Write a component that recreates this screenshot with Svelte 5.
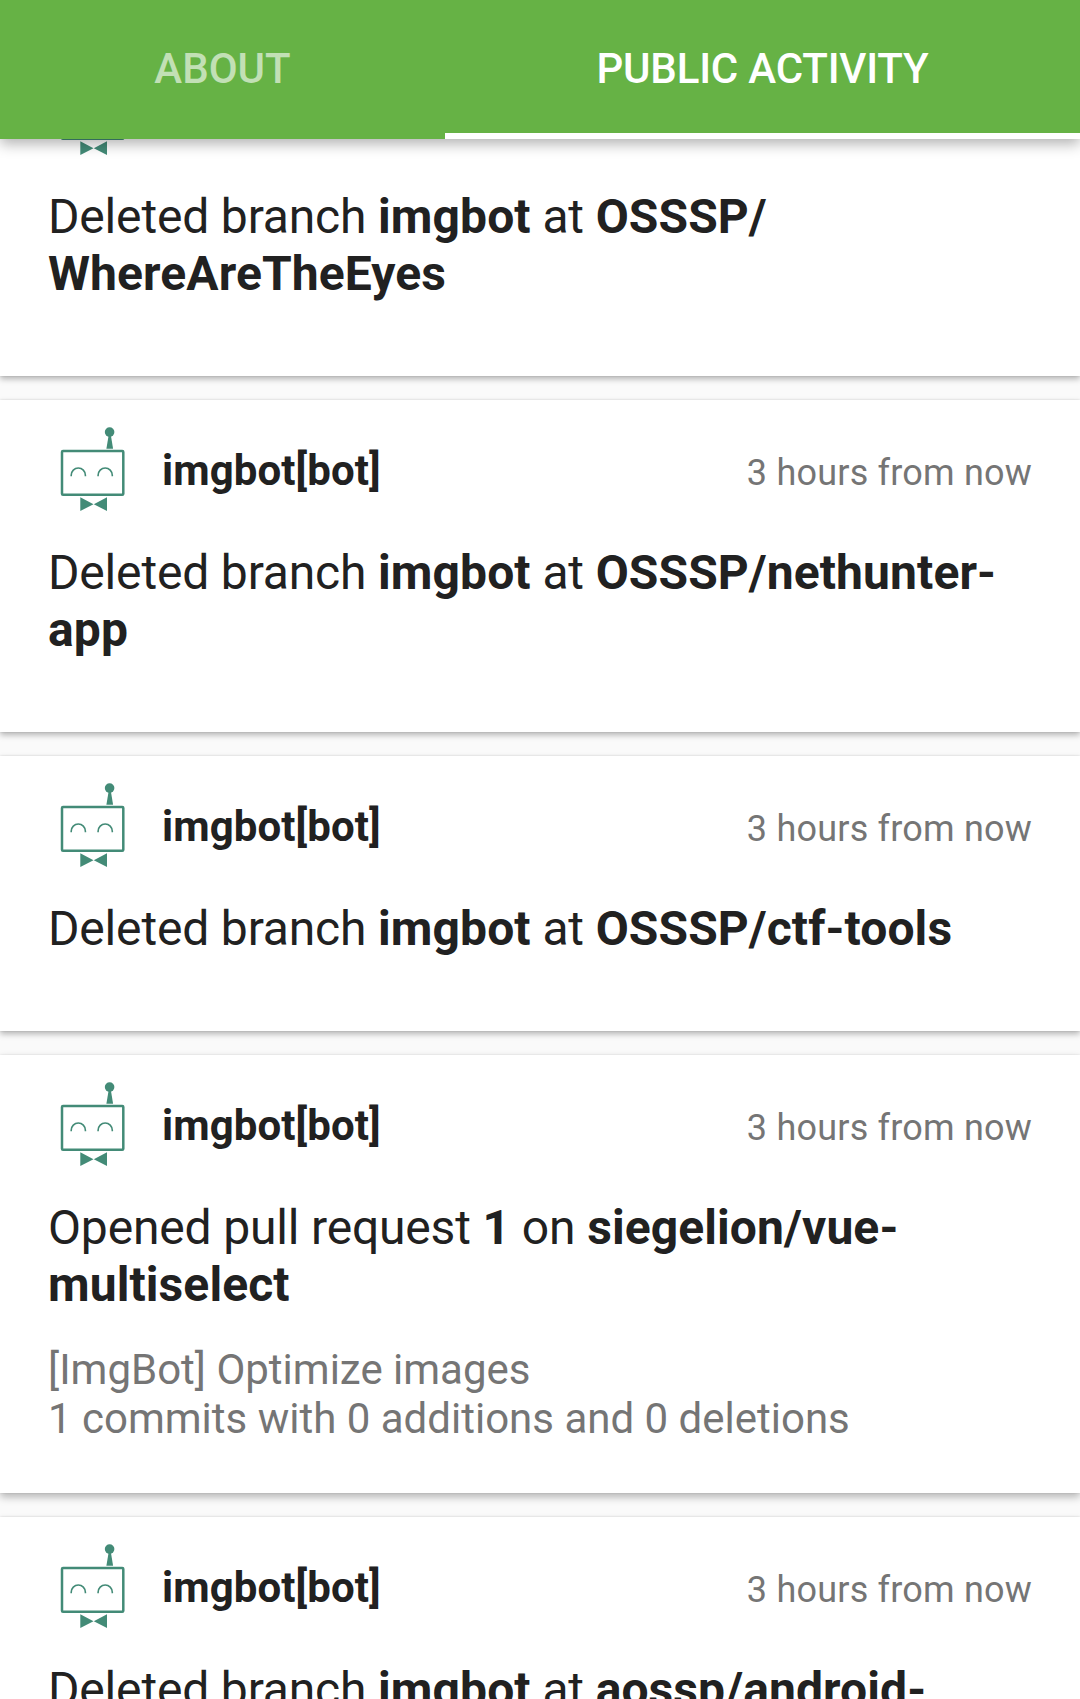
<script>
  const tabs = [
    { label: 'About', active: false },
    { label: 'Public Activity', active: true },
  ];

  // Each title is a list of runs; `b` marks the emphasised ones.
  const deleted = (owner, repo) => [
    { t: 'Deleted branch ' },
    { t: 'imgbot', b: true },
    { t: ' at ' },
    { t: owner + '/', b: true, wrap: true },
    { t: repo, b: true },
  ];

  const events = [
    { title: deleted('OSSSP', 'WhereAreTheEyes') },
    { title: deleted('OSSSP', 'nethunter-app') },
    { title: deleted('OSSSP', 'ctf-tools') },
    {
      title: [
        { t: 'Opened pull request ' },
        { t: '1', b: true },
        { t: ' on ' },
        { t: 'siegelion/vue-multiselect', b: true },
      ],
      details: ['[ImgBot] Optimize images', '1 commits with 0 additions and 0 deletions'],
    },
    { title: deleted('aossp', 'android-') },
  ];
</script>

<div class="screen">
  <nav class="tabs">
    {#each tabs as tab}
      <div class="tab" class:active={tab.active}>{tab.label}</div>
    {/each}
  </nav>

  <main class="viewport">
    <div class="feed">
      {#each events as event}
        <article class="card" class:detailed={event.details}>
          <header class="head">
            <svg class="avatar" viewBox="0 0 90 90" aria-hidden="true">
              <circle cx="61.6" cy="8.1" r="4.8" />
              <path d="M60.6 11.5h2.3l2.2 13.3h-6.7z" />
              <rect class="line" x="14" y="27" width="61.3" height="43.8" rx="1" />
              <path class="eye" d="M23.2 52.3v-1a7.1 7.3 0 0 1 14.2 0v1M50.1 52.3v-1a7.1 7.3 0 0 1 14.2 0v1" />
              <path d="M32.3 73.3v13.7l13.2-6.8zM59 73.3v13.7l-13.2-6.8z" />
            </svg>
            <div class="meta">
              <span class="name">imgbot[bot]</span>
              <span class="time">3 hours from now</span>
            </div>
          </header>
          <p class="title">{#each event.title as run}{#if run.b}<b>{run.t}</b>{:else}{run.t}{/if}{#if run.wrap}<wbr />{/if}{/each}</p>
          {#if event.details}
            <div class="details">
              {#each event.details as line}<div>{line}</div>{/each}
            </div>
          {/if}
        </article>
      {/each}
    </div>
  </main>
</div>

<style>
  :global(body) {
    margin: 0;
    background: #fafafa;
  }
  .screen {
    display: flex;
    flex-direction: column;
    width: 1080px;
    height: 1699px;
    overflow: hidden;
    background: #fafafa;
    font-family: Roboto, sans-serif;
    color: #212121;
  }
  .tabs {
    position: relative;
    z-index: 1;
    flex: none;
    display: grid;
    grid-template-columns: 445px 1fr;
    height: 139px;
    background: #66b245;
    box-shadow: 0 5px 13px rgba(0, 0, 0, 0.3);
  }
  .tab {
    box-sizing: border-box;
    padding-top: 44px;
    text-align: center;
    text-transform: uppercase;
    font-size: 42px;
    line-height: 49px;
    font-weight: 500;
    color: #c2e0b5;
    border-bottom: 6px solid transparent;
  }
  .tab.active {
    color: #fff;
    letter-spacing: -0.2px;
    border-bottom-color: #fff;
  }
  .viewport {
    flex: 1;
    min-height: 0;
    overflow: hidden;
  }
  .feed {
    display: flex;
    flex-direction: column;
    gap: 24px;
    /* the list is scrolled part-way through its first card */
    margin-top: -95px;
  }
  .card {
    padding: 24px 48px 74px;
    background: #fff;
    box-shadow: 0 3px 6px rgba(0, 0, 0, 0.28), 0 0 2px rgba(0, 0, 0, 0.12);
  }
  .card.detailed {
    padding-bottom: 50px;
    box-shadow: 0 4px 8px rgba(0, 0, 0, 0.28), 0 0 2px rgba(0, 0, 0, 0.1);
  }
  .head {
    display: flex;
    gap: 24px;
    height: 90px;
  }
  .avatar {
    flex: none;
    width: 90px;
    height: 90px;
    fill: #438b77;
  }
  .line,
  .eye {
    fill: none;
    stroke: #438b77;
    stroke-width: 2.5;
  }
  .eye {
    stroke-width: 1.6;
  }
  .meta {
    flex: 1;
    display: flex;
    justify-content: space-between;
    align-items: baseline;
    padding-top: 22px;
  }
  .name {
    font-size: 42px;
    line-height: 49px;
    font-weight: 700;
    letter-spacing: 0.08px;
  }
  .time {
    font-size: 36px;
    line-height: 42px;
    letter-spacing: 0.2px;
    color: #757575;
  }
  .title {
    margin: 30px 0 0;
    font-size: 48px;
    line-height: 57px;
    letter-spacing: -0.17px;
  }
  .title b {
    letter-spacing: 0.1px;
  }
  .details {
    margin-top: 32px;
    font-size: 42px;
    line-height: 49px;
    color: #757575;
  }
</style>
